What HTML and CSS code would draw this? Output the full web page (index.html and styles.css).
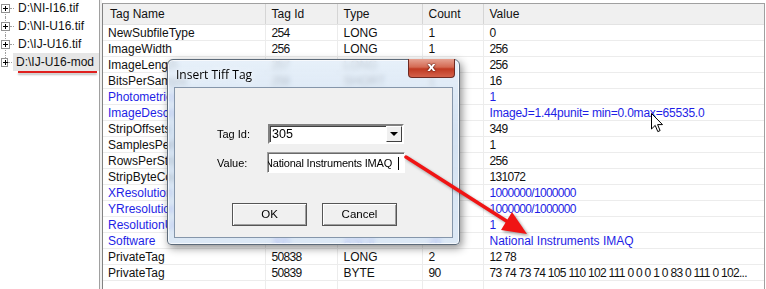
FILE: index.html
```html
<!DOCTYPE html>
<html lang="en">
<head>
    <meta charset="UTF-8">
    <title>Tiff Tag Editor</title>
    <link rel="stylesheet" href="styles.css">
</head>
<body>
    <div class="app">
        <ul class="tree">
            <li class="tree-item"><span class="expander"></span><span class="tree-label">D:\NI-I16.tif</span></li>
            <li class="tree-item"><span class="expander"></span><span class="tree-label">D:\NI-U16.tif</span></li>
            <li class="tree-item"><span class="expander"></span><span class="tree-label">D:\IJ-U16.tif</span></li>
            <li class="tree-item last"><span class="expander"></span><span class="tree-label selected">D:\IJ-U16-mod</span></li>
        </ul>
        <div class="splitter"></div>
        <div class="grid">
            <table class="tags">
                <colgroup>
                    <col class="c-name"><col class="c-id"><col class="c-type"><col class="c-count"><col class="c-value">
                </colgroup>
                <thead>
                    <tr><th>Tag Name</th><th>Tag Id</th><th>Type</th><th>Count</th><th>Value</th></tr>
                </thead>
                <tbody>
                    <tr><td>NewSubfileType</td><td class="num">254</td><td>LONG</td><td class="num">1</td><td class="num">0</td></tr>
                    <tr><td>ImageWidth</td><td class="num">256</td><td>LONG</td><td class="num">1</td><td class="num">256</td></tr>
                    <tr><td>ImageLength</td><td class="num">257</td><td>LONG</td><td class="num">1</td><td class="num">256</td></tr>
                    <tr><td>BitsPerSample</td><td class="num">258</td><td>SHORT</td><td class="num">1</td><td class="num">16</td></tr>
                    <tr class="edited"><td>PhotometricInterpretation</td><td class="num">262</td><td>SHORT</td><td class="num">1</td><td class="num">1</td></tr>
                    <tr class="edited"><td>ImageDescription</td><td class="num">270</td><td>ASCII</td><td class="num">60</td><td class="dense">ImageJ=1.44punit= min=0.0max=65535.0</td></tr>
                    <tr><td>StripOffsets</td><td class="num">273</td><td>LONG</td><td class="num">1</td><td class="num">349</td></tr>
                    <tr><td>SamplesPerPixel</td><td class="num">277</td><td>SHORT</td><td class="num">1</td><td class="num">1</td></tr>
                    <tr><td>RowsPerStrip</td><td class="num">278</td><td>LONG</td><td class="num">1</td><td class="num">256</td></tr>
                    <tr><td>StripByteCounts</td><td class="num">279</td><td>LONG</td><td class="num">1</td><td class="num">131072</td></tr>
                    <tr class="edited"><td>XResolution</td><td class="num">282</td><td>RATIONAL</td><td class="num">1</td><td class="num">1000000/1000000</td></tr>
                    <tr class="edited"><td>YRresolution</td><td class="num">283</td><td>RATIONAL</td><td class="num">1</td><td class="num">1000000/1000000</td></tr>
                    <tr class="edited"><td>ResolutionUnit</td><td class="num">296</td><td>SHORT</td><td class="num">1</td><td class="num">1</td></tr>
                    <tr class="edited"><td>Software</td><td class="num">305</td><td>ASCII</td><td class="num">26</td><td>National Instruments IMAQ</td></tr>
                    <tr><td>PrivateTag</td><td class="num">50838</td><td>LONG</td><td class="num">2</td><td class="num">12 78</td></tr>
                    <tr><td>PrivateTag</td><td class="num">50839</td><td>BYTE</td><td class="num">90</td><td class="num">73 74 73 74 105 110 102 111 0 0 0 1 0 83 0 111 0 102...</td></tr>
                    <tr class="empty"><td></td><td></td><td></td><td></td><td></td></tr>
                </tbody>
            </table>
        </div>
    </div>

    <div class="dialog">
        <div class="dialog-title">Insert Tiff Tag</div>
        <div class="close-btn">x</div>
        <div class="dialog-client">
            <div class="field-row">
                <label class="field-label">Tag Id:</label>
                <div class="combo">
                    <span class="combo-text">305</span>
                    <span class="combo-drop"></span>
                </div>
            </div>
            <div class="field-row">
                <label class="field-label">Value:</label>
                <div class="text-input">
                    <span class="input-text">National Instruments IMAQ</span>
                    <span class="caret"></span>
                </div>
            </div>
            <div class="button-row">
                <div class="btn">OK</div>
                <div class="btn">Cancel</div>
            </div>
        </div>
    </div>

    <svg class="arrow" width="766" height="289" viewBox="0 0 766 289">
        <line x1="406" y1="157" x2="508" y2="222" stroke="#f01414" stroke-width="3.5" stroke-linecap="round"/>
        <polygon points="527,234 512,212 501,230" fill="#f01414"/>
    </svg>

    <svg class="cursor" width="13" height="20" viewBox="0 0 13 20">
        <path d="M0.5 0.5 L0.5 16 L4.2 12.4 L6.8 18.6 L9.1 17.6 L6.6 11.6 L11.5 11.6 Z" fill="#fff" stroke="#000" stroke-width="1"/>
    </svg>
</body>
</html>
```

FILE: styles.css
```css
body {
    margin: 0;
    width: 766px;
    height: 289px;
    overflow: hidden;
    background: #fff;
    font-family: "Liberation Sans", Arial, sans-serif;
    font-size: 12px;
    color: #111;
    position: relative;
}

.app {
    display: flex;
    height: 289px;
}

/* left file tree */
.tree {
    list-style: none;
    margin: 0;
    padding: 0;
    width: 99px;
    border-right: 1px solid #a0a0a0;
    position: relative;
}

.tree-item {
    display: flex;
    align-items: center;
    height: 18px;
    position: relative;
}

.tree-item:first-child {
    margin-top: -1px;
}

.tree-item::before {
    content: "";
    position: absolute;
    left: 5px;
    top: 0;
    height: 18px;
    border-left: 1px dotted #a0a0a0;
}

.tree-item:first-child::before {
    top: 9px;
    height: 9px;
}

.tree-item.last::before {
    height: 9px;
}

.expander {
    width: 9px;
    height: 9px;
    box-sizing: border-box;
    border: 1px solid #919191;
    background: #fff;
    margin-left: 1px;
    position: relative;
    z-index: 1;
}

.expander::before,
.expander::after {
    content: "";
    position: absolute;
    background: #000;
}

.expander::before {
    left: 1px;
    top: 3px;
    width: 5px;
    height: 1px;
}

.expander::after {
    left: 3px;
    top: 1px;
    width: 1px;
    height: 5px;
}

.tree-label {
    margin-left: 5px;
    padding: 2px 3px 2px 3px;
    white-space: nowrap;
    position: relative;
    line-height: 14px;
}

.tree-label::before {
    content: "";
    position: absolute;
    left: -5px;
    top: 9px;
    width: 4px;
    border-top: 1px dotted #a0a0a0;
}

.tree-label.selected {
    background: #e6e6e6;
    padding-right: 5px;
}

.tree-label.selected::after {
    content: "";
    position: absolute;
    left: 5px;
    right: 2px;
    bottom: -2px;
    height: 2px;
    background: #e0201e;
    box-shadow: 0 2px 2px rgba(0, 0, 0, 0.25);
}

.splitter {
    width: 2px;
    background: #f0f0f0;
}

/* tag grid */
.grid {
    flex: 1;
    margin-top: 3px;
    border-top: 1px solid #a0a0a0;
    border-left: 1px solid #828282;
    border-right: 1px solid #a0a0a0;
    margin-right: 1px;
    overflow: hidden;
}

.tags {
    border-collapse: collapse;
    table-layout: fixed;
    width: 661px;
}

.c-name { width: 162px; }
.c-id { width: 72px; }
.c-type { width: 85px; }
.c-count { width: 61px; }
.c-value { width: 281px; }

.tags th {
    height: 20px;
    padding: 0 6px;
    background: #f0f0f0;
    border-right: 1px solid #d5d5d5;
    border-bottom: 1px solid #e3e3e3;
    font-weight: normal;
    text-align: left;
    white-space: nowrap;
    overflow: hidden;
}

.tags th:first-child {
    padding-left: 7px;
}

.tags td {
    height: 14px;
    padding: 1px 2px 0 6px;
    border-right: 1px solid #ececec;
    border-bottom: 1px solid #ececec;
    white-space: nowrap;
    overflow: hidden;
    line-height: 14px;
}

.tags td:first-child {
    padding-left: 5px;
}

.tags td.num {
    letter-spacing: -0.7px;
}

.tags td.dense {
    letter-spacing: -0.2px;
}

.tags tr.edited td {
    color: #1e1ee6;
}

.tags tr.empty td {
    border-bottom: none;
}

/* insert dialog */
.dialog {
    position: absolute;
    left: 167px;
    top: 59px;
    width: 293px;
    height: 186px;
    box-sizing: border-box;
    border: 1px solid #5d6b7a;
    border-radius: 6px 6px 4px 4px;
    background: linear-gradient(180deg, rgba(226, 237, 248, 0.84) 0%, rgba(200, 218, 238, 0.78) 40%, rgba(212, 227, 243, 0.8) 100%);
    backdrop-filter: blur(2.5px);
    box-shadow: 2px 3px 8px rgba(0, 0, 0, 0.45), inset 0 0 0 1px rgba(255, 255, 255, 0.7);
    padding: 27px 6px 6px;
}

.dialog-title {
    position: absolute;
    left: 8px;
    top: 6px;
    font-family: "Open Sans", "Liberation Sans", sans-serif;
    font-size: 12px;
    color: #000;
    text-shadow: 0 0 6px rgba(255, 255, 255, 0.9);
}

.close-btn {
    position: absolute;
    right: 4px;
    top: -1px;
    width: 47px;
    height: 19px;
    box-sizing: border-box;
    border: 1px solid #6e2a22;
    border-top: none;
    border-radius: 0 0 4px 4px;
    background: linear-gradient(180deg, #e6a292 0%, #d46a53 45%, #c03a22 55%, #d4614a 100%);
    color: #fff;
    font-family: "DejaVu Sans", sans-serif;
    font-weight: bold;
    font-size: 13px;
    line-height: 15px;
    text-align: center;
    text-shadow: 0 0 2px #4a1008, 0 0 1px #4a1008;
}

.dialog-client {
    height: 100%;
    box-sizing: border-box;
    background: #f0f0f0;
    border: 1px solid #8596aa;
    padding: 36px 0 0 42px;
    font-size: 11px;
    color: #000;
}

.field-row {
    display: flex;
    align-items: center;
    margin-bottom: 8px;
}

.field-label {
    width: 51px;
}

.combo {
    width: 136px;
    height: 20px;
    box-sizing: border-box;
    border: 2px solid;
    border-color: #808080 #fff #fff #808080;
    background: #fff;
    display: flex;
    align-items: center;
    justify-content: space-between;
    box-shadow: inset 1px 1px 0 #404040;
    font-size: 12.5px;
}

.combo-text {
    padding-left: 2px;
}

.combo-drop {
    width: 16px;
    height: 16px;
    box-sizing: border-box;
    border: 1px solid;
    border-color: #fff #404040 #404040 #fff;
    background: #f0f0f0;
    position: relative;
}

.combo-drop::after {
    content: "";
    position: absolute;
    left: 3px;
    top: 5px;
    border-left: 4px solid transparent;
    border-right: 4px solid transparent;
    border-top: 4px solid #000;
}

.text-input {
    width: 138px;
    height: 21px;
    box-sizing: border-box;
    border: 1px solid;
    border-color: #a0a0a0 #fff #fff #a0a0a0;
    box-shadow: inset 1px 1px 0 #6a6a6a;
    background: #fff;
    display: flex;
    align-items: center;
    overflow: hidden;
    position: relative;
    margin-left: -1px;
    font-size: 11px;
    letter-spacing: -0.2px;
}

.input-text {
    margin-left: -3px;
    white-space: nowrap;
}

.caret {
    position: absolute;
    right: 5px;
    top: 4px;
    width: 1px;
    height: 13px;
    background: #000;
}

.button-row {
    display: flex;
    gap: 15px;
    margin-top: 30px;
    margin-left: 15px;
}

.btn {
    width: 75px;
    height: 23px;
    box-sizing: border-box;
    border: 1px solid #555;
    box-shadow: inset 1px 1px 0 #fff, inset -1px -1px 0 #a0a0a0;
    background: #f0f0f0;
    text-align: center;
    line-height: 21px;
    font-size: 11.5px;
}

/* annotations over the screenshot */
.arrow {
    position: absolute;
    left: 0;
    top: 0;
    pointer-events: none;
    filter: drop-shadow(2px 2px 1.5px rgba(0, 0, 0, 0.35));
}

.cursor {
    position: absolute;
    left: 651px;
    top: 113px;
}
```
